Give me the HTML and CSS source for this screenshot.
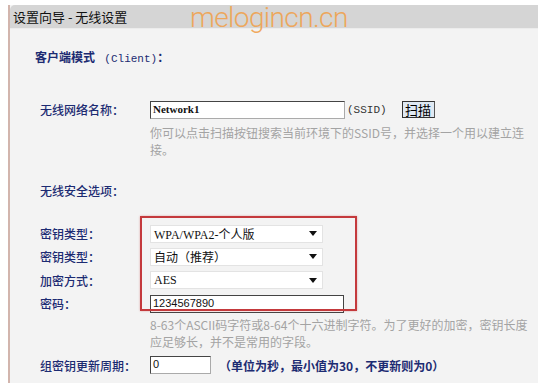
FILE: index.html
```html
<!DOCTYPE html>
<html>
<head>
<meta charset="utf-8">
<link rel="stylesheet" href="styles.css">
</head>
<body>
<div class="panel">
  <div class="header">设置向导 - 无线设置</div>
  <div class="logo">melogincn.cn</div>
  <div class="content">
    <div class="mode">客户端模式 <span class="mono">&nbsp;(Client)</span>：</div>

    <div class="row ssid-row">
      <div class="label">无线网络名称：</div>
      <div class="ctrl">
        <span class="input ssid">Network1</span>
        <span class="ssid-tag">(SSID)</span>
        <span class="btn">扫描</span>
      </div>
    </div>
    <div class="hint">你可以点击扫描按钮搜索当前环境下的SSID号，并选择一个用以建立连<br>接。</div>

    <div class="section">无线安全选项：</div>

    <div class="secgroup">
      <div class="redbox"></div>
      <div class="row srow">
        <div class="label">密钥类型：</div>
        <div class="ctrl"><span class="select"><span class="sv">WPA/WPA2-个人版</span><span class="arrow"></span></span></div>
      </div>
      <div class="row srow">
        <div class="label">密钥类型：</div>
        <div class="ctrl"><span class="select"><span class="sv">自动（推荐）</span><span class="arrow"></span></span></div>
      </div>
      <div class="row srow">
        <div class="label">加密方式：</div>
        <div class="ctrl"><span class="select"><span class="sv">AES</span><span class="arrow"></span></span></div>
      </div>
      <div class="row srow">
        <div class="label">密码：</div>
        <div class="ctrl"><span class="input pwd">1234567890</span></div>
      </div>
    </div>
    <div class="hint hint2">8-63个ASCII码字符或8-64个十六进制字符。为了更好的加密，密钥长度<br>应足够长，并不是常用的字段。</div>

    <div class="row grow">
      <div class="label">组密钥更新周期：</div>
      <div class="ctrl">
        <span class="input period">0</span>
        <span class="note">（单位为秒，最小值为30，不更新则为0）</span>
      </div>
    </div>
  </div>
</div>
</body>
</html>
```
FILE: styles.css
```css
html, body {
  margin: 0;
  padding: 0;
  background: #ffffff;
}
body {
  font-family: "Noto Sans CJK SC", "DejaVu Sans", sans-serif;
  font-size: 12px;
  color: #1c2b72;
}
.panel {
  position: relative;
  margin: 5px 0 0 8px;
  border-left: 2px solid #d2b5ad;
  background: #f3f3f3;
  height: 378px;
}
.header {
  height: 23px;
  line-height: 23px;
  background: #d5d5d5;
  border-top-left-radius: 5px;
  padding-left: 3px;
  color: #111;
  font-size: 13px;
  border-bottom: 1px solid #ececec;
}
.logo {
  position: absolute;
  left: 180px;
  top: -4px;
  font-family: "Roboto", sans-serif;
  font-weight: 300;
  font-size: 28px;
  letter-spacing: -0.6px;
  color: #f0a24e;
  line-height: normal;
  opacity: 0.9;
}
.content {
  padding-left: 30px;
}
.mono {
  font-family: "Liberation Mono", monospace;
  font-size: 11px;
  font-weight: normal;
}
.mode {
  margin-top: 20px;
  line-height: 16px;
  margin-left: -5px;
  font-weight: bold;
}
.row {
  display: flex;
  align-items: center;
}
.label {
  width: 110px;
  flex: none;
  font-weight: 500;
}
.ctrl {
  display: flex;
  align-items: center;
}
.ssid-row {
  margin-top: 34px;
  height: 17px;
}
.input {
  display: inline-block;
  box-sizing: border-box;
  height: 18px;
  line-height: 15px;
  background: #fff;
  border: 1px solid #444;
  border-right-color: #aaa;
  border-bottom-color: #aaa;
  padding-left: 2px;
  color: #111;
  font-family: "Liberation Mono", monospace;
  font-size: 11px;
}
.ssid {
  width: 195px;
  font-family: "Liberation Serif", serif;
  font-weight: bold;
  font-size: 11px;
}
.ssid-tag {
  font-family: "Liberation Mono", monospace;
  font-size: 11px;
  color: #333;
  margin-left: 2px;
}
.btn {
  margin-left: 15px;
  box-sizing: border-box;
  height: 17px;
  width: 33px;
  line-height: 15px;
  text-align: center;
  background: #dfe9f3;
  border: 1px solid #333;
  border-right-color: #555;
  color: #000;
  font-size: 13px;
}
.hint {
  margin-left: 110px;
  margin-top: 6px;
  line-height: 17px;
  color: #a3a3a3;
}
.section {
  margin-top: 25px;
  line-height: 16px;
  font-weight: 500;
}
.secgroup {
  position: relative;
  margin-top: 23px;
}
.redbox {
  position: absolute;
  left: 100px;
  top: -6px;
  width: 213px;
  height: 91px;
  border: 2px solid #c4393c;
  box-shadow: 0 0 2px rgba(200, 60, 60, 0.4);
}
.srow {
  height: 23.3px;
}
.select {
  display: flex;
  align-items: center;
  box-sizing: border-box;
  width: 173px;
  height: 18px;
  background: #fff;
  border: 1px solid #e3e3e3;
  padding-left: 3px;
  color: #111;
}
.sv {
  flex: 1;
  font-size: 12px;
  font-family: "Liberation Serif", "Noto Sans CJK SC", serif;
}
.arrow {
  width: 0;
  height: 0;
  border-left: 4px solid transparent;
  border-right: 4px solid transparent;
  border-top: 5px solid #111;
  margin-right: 5px;
}
.pwd {
  width: 194px;
  font-family: "Liberation Sans", sans-serif;
  border-color: #444;
}
.hint2 {
  margin-top: 1px;
}
.grow {
  margin-top: 6px;
  height: 18px;
}
.period {
  width: 61px;
  font-family: "Liberation Sans", sans-serif;
}
.note {
  margin-left: 8px;
  font-weight: bold;
}
```
